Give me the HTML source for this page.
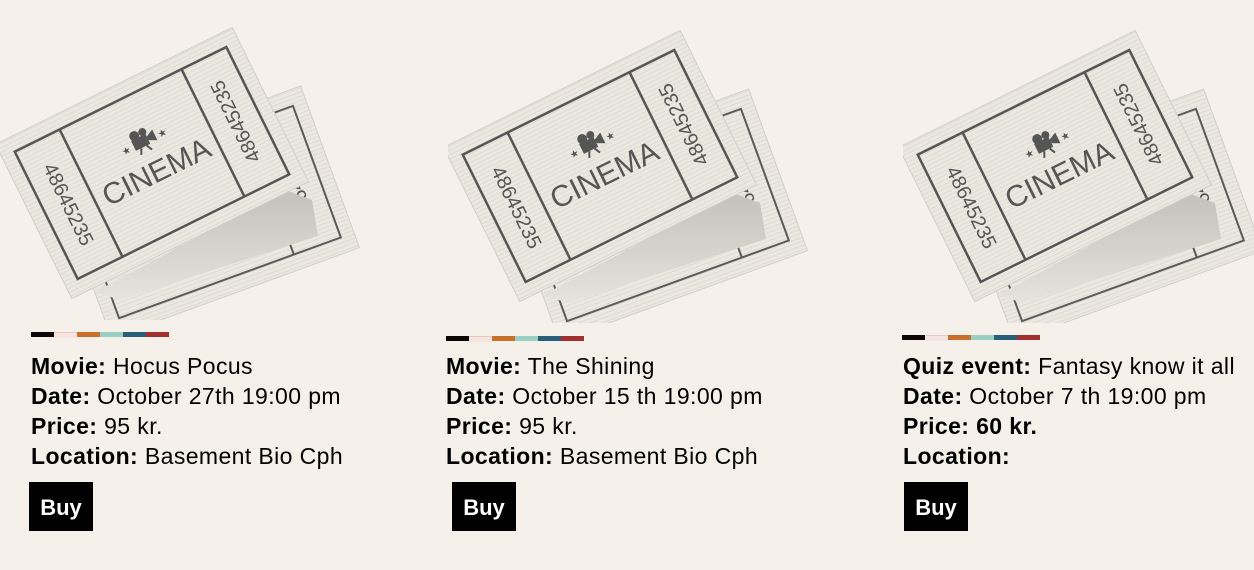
<!DOCTYPE html>
<html><head><meta charset="utf-8">
<style>
html,body{margin:0;padding:0;background:#f5f1ea;width:1254px;height:570px;overflow:hidden;font-family:"Liberation Sans",Arial,sans-serif;color:#000}
.col{position:absolute;top:0}
.tk{position:absolute;left:0;top:20px}
.bar{position:absolute;height:5px;width:138px;display:flex}
.bar span{flex:1;height:5px}
.info{position:absolute;font-size:23px;letter-spacing:0.4px;line-height:30px;white-space:nowrap}
.buy{position:absolute;width:64px;height:49px;background:#000;color:#fff;font-weight:bold;font-size:22px;line-height:51px;text-align:center}
</style></head><body>

<svg width="0" height="0" style="position:absolute">
<defs>
<pattern id="str" width="6" height="4" patternUnits="userSpaceOnUse"><rect width="6" height="4" fill="#ebe8e2"/><rect y="3" width="6" height="1" fill="#dedbd4"/></pattern>
<linearGradient id="sh" x1="0" y1="0" x2="0" y2="1"><stop offset="0" stop-color="#c4c1bb"/><stop offset="1" stop-color="#e6e3dd"/></linearGradient>
</defs></svg>

<div class="col" style="left:0">
<svg class="tk" width="360" height="300" viewBox="0 20 360 300">
 <g transform="translate(206,212) rotate(-20)">
  <rect x="-132" y="-86" width="264" height="172" fill="url(#str)" stroke="#d2cfc9"/>
  <rect x="-118" y="-70" width="236" height="140" fill="none" stroke="#5a5a5a" stroke-width="2"/>
  <line x1="68" y1="-70" x2="68" y2="70" stroke="#5a5a5a" stroke-width="2"/>
  <text transform="translate(93,0) rotate(-90)" y="7" font-size="20" fill="#555" text-anchor="middle" font-family="Liberation Sans,sans-serif">48645235</text>
 </g>
 <polygon points="95,292 285,190 312,200 318,236 120,300" fill="url(#sh)"/>
 <g transform="translate(152,163) rotate(-26.3)">
  <rect x="-132" y="-86" width="264" height="172" fill="url(#str)" stroke="#d2cfc9"/>
  <rect x="-118" y="-71" width="236" height="142" fill="none" stroke="#555" stroke-width="2.5"/>
  <line x1="-68" y1="-71" x2="-68" y2="71" stroke="#555" stroke-width="2.5"/>
  <line x1="68" y1="-71" x2="68" y2="71" stroke="#555" stroke-width="2.5"/>
  <text x="0" y="20" font-size="30" fill="#555" text-anchor="middle" font-family="Liberation Sans,sans-serif">CINEMA</text>
  <g transform="translate(0,-25)" fill="#555">
   <circle cx="-4" cy="-7" r="5"/><circle cx="5" cy="-7" r="4"/><rect x="-9" y="-4" width="16" height="11"/><polygon points="7,-1 15,-5 15,7 7,3"/><line x1="-3" y1="7" x2="-6" y2="13" stroke="#555" stroke-width="2"/><line x1="3" y1="7" x2="6" y2="13" stroke="#555" stroke-width="2"/>
   <text x="-22" y="6" font-size="10">★</text><text x="18" y="6" font-size="10">★</text>
  </g>
  <text transform="translate(-93,0) rotate(90)" y="7" font-size="20" fill="#555" text-anchor="middle" font-family="Liberation Sans,sans-serif">48645235</text>
  <text transform="translate(93,0) rotate(-90)" y="7" font-size="20" fill="#555" text-anchor="middle" font-family="Liberation Sans,sans-serif">48645235</text>
 </g>
</svg>
</div>

<div class="col" style="left:448px;top:3px">
<svg class="tk" width="360" height="300" viewBox="0 20 360 300">
 <g transform="translate(206,212) rotate(-20)">
  <rect x="-132" y="-86" width="264" height="172" fill="url(#str)" stroke="#d2cfc9"/>
  <rect x="-118" y="-70" width="236" height="140" fill="none" stroke="#5a5a5a" stroke-width="2"/>
  <line x1="68" y1="-70" x2="68" y2="70" stroke="#5a5a5a" stroke-width="2"/>
  <text transform="translate(93,0) rotate(-90)" y="7" font-size="20" fill="#555" text-anchor="middle" font-family="Liberation Sans,sans-serif">48645235</text>
 </g>
 <polygon points="95,292 285,190 312,200 318,236 120,300" fill="url(#sh)"/>
 <g transform="translate(152,163) rotate(-26.3)">
  <rect x="-132" y="-86" width="264" height="172" fill="url(#str)" stroke="#d2cfc9"/>
  <rect x="-118" y="-71" width="236" height="142" fill="none" stroke="#555" stroke-width="2.5"/>
  <line x1="-68" y1="-71" x2="-68" y2="71" stroke="#555" stroke-width="2.5"/>
  <line x1="68" y1="-71" x2="68" y2="71" stroke="#555" stroke-width="2.5"/>
  <text x="0" y="20" font-size="30" fill="#555" text-anchor="middle" font-family="Liberation Sans,sans-serif">CINEMA</text>
  <g transform="translate(0,-25)" fill="#555">
   <circle cx="-4" cy="-7" r="5"/><circle cx="5" cy="-7" r="4"/><rect x="-9" y="-4" width="16" height="11"/><polygon points="7,-1 15,-5 15,7 7,3"/><line x1="-3" y1="7" x2="-6" y2="13" stroke="#555" stroke-width="2"/><line x1="3" y1="7" x2="6" y2="13" stroke="#555" stroke-width="2"/>
   <text x="-22" y="6" font-size="10">★</text><text x="18" y="6" font-size="10">★</text>
  </g>
  <text transform="translate(-93,0) rotate(90)" y="7" font-size="20" fill="#555" text-anchor="middle" font-family="Liberation Sans,sans-serif">48645235</text>
  <text transform="translate(93,0) rotate(-90)" y="7" font-size="20" fill="#555" text-anchor="middle" font-family="Liberation Sans,sans-serif">48645235</text>
 </g>
</svg>
</div>

<div class="col" style="left:903px;top:3px">
<svg class="tk" width="360" height="300" viewBox="0 20 360 300">
 <g transform="translate(206,212) rotate(-20)">
  <rect x="-132" y="-86" width="264" height="172" fill="url(#str)" stroke="#d2cfc9"/>
  <rect x="-118" y="-70" width="236" height="140" fill="none" stroke="#5a5a5a" stroke-width="2"/>
  <line x1="68" y1="-70" x2="68" y2="70" stroke="#5a5a5a" stroke-width="2"/>
  <text transform="translate(93,0) rotate(-90)" y="7" font-size="20" fill="#555" text-anchor="middle" font-family="Liberation Sans,sans-serif">48645235</text>
 </g>
 <polygon points="95,292 285,190 312,200 318,236 120,300" fill="url(#sh)"/>
 <g transform="translate(152,163) rotate(-26.3)">
  <rect x="-132" y="-86" width="264" height="172" fill="url(#str)" stroke="#d2cfc9"/>
  <rect x="-118" y="-71" width="236" height="142" fill="none" stroke="#555" stroke-width="2.5"/>
  <line x1="-68" y1="-71" x2="-68" y2="71" stroke="#555" stroke-width="2.5"/>
  <line x1="68" y1="-71" x2="68" y2="71" stroke="#555" stroke-width="2.5"/>
  <text x="0" y="20" font-size="30" fill="#555" text-anchor="middle" font-family="Liberation Sans,sans-serif">CINEMA</text>
  <g transform="translate(0,-25)" fill="#555">
   <circle cx="-4" cy="-7" r="5"/><circle cx="5" cy="-7" r="4"/><rect x="-9" y="-4" width="16" height="11"/><polygon points="7,-1 15,-5 15,7 7,3"/><line x1="-3" y1="7" x2="-6" y2="13" stroke="#555" stroke-width="2"/><line x1="3" y1="7" x2="6" y2="13" stroke="#555" stroke-width="2"/>
   <text x="-22" y="6" font-size="10">★</text><text x="18" y="6" font-size="10">★</text>
  </g>
  <text transform="translate(-93,0) rotate(90)" y="7" font-size="20" fill="#555" text-anchor="middle" font-family="Liberation Sans,sans-serif">48645235</text>
  <text transform="translate(93,0) rotate(-90)" y="7" font-size="20" fill="#555" text-anchor="middle" font-family="Liberation Sans,sans-serif">48645235</text>
 </g>
</svg>
</div>

<div class="bar" style="left:31px;top:332px"><span style="background:#0e0606"></span><span style="background:#f6e4e0;border-top:1px solid #e9c8c4"></span><span style="background:#c8702c"></span><span style="background:#9ccfc3"></span><span style="background:#2a5f7a"></span><span style="background:#a03030"></span></div>
<div class="bar" style="left:446px;top:336px"><span style="background:#0e0606"></span><span style="background:#f6e4e0;border-top:1px solid #e9c8c4"></span><span style="background:#c8702c"></span><span style="background:#9ccfc3"></span><span style="background:#2a5f7a"></span><span style="background:#a03030"></span></div>
<div class="bar" style="left:902px;top:335px"><span style="background:#0e0606"></span><span style="background:#f6e4e0;border-top:1px solid #e9c8c4"></span><span style="background:#c8702c"></span><span style="background:#9ccfc3"></span><span style="background:#2a5f7a"></span><span style="background:#a03030"></span></div>

<div class="info" style="left:31px;top:351px"><b>Movie:</b> Hocus Pocus<br><b>Date:</b> October 27th 19:00 pm<br><b>Price:</b> 95 kr.<br><b>Location:</b> Basement Bio Cph</div>
<div class="info" style="left:446px;top:351px"><b>Movie:</b> The Shining<br><b>Date:</b> October 15 th 19:00 pm<br><b>Price:</b> 95 kr.<br><b>Location:</b> Basement Bio Cph</div>
<div class="info" style="left:903px;top:351px"><b>Quiz event:</b> Fantasy know it all<br><b>Date:</b> October 7 th 19:00 pm<br><b>Price: 60 kr.</b><br><b>Location:</b></div>

<div class="buy" style="left:29px;top:482px">Buy</div>
<div class="buy" style="left:452px;top:482px">Buy</div>
<div class="buy" style="left:904px;top:482px">Buy</div>
</body></html>
